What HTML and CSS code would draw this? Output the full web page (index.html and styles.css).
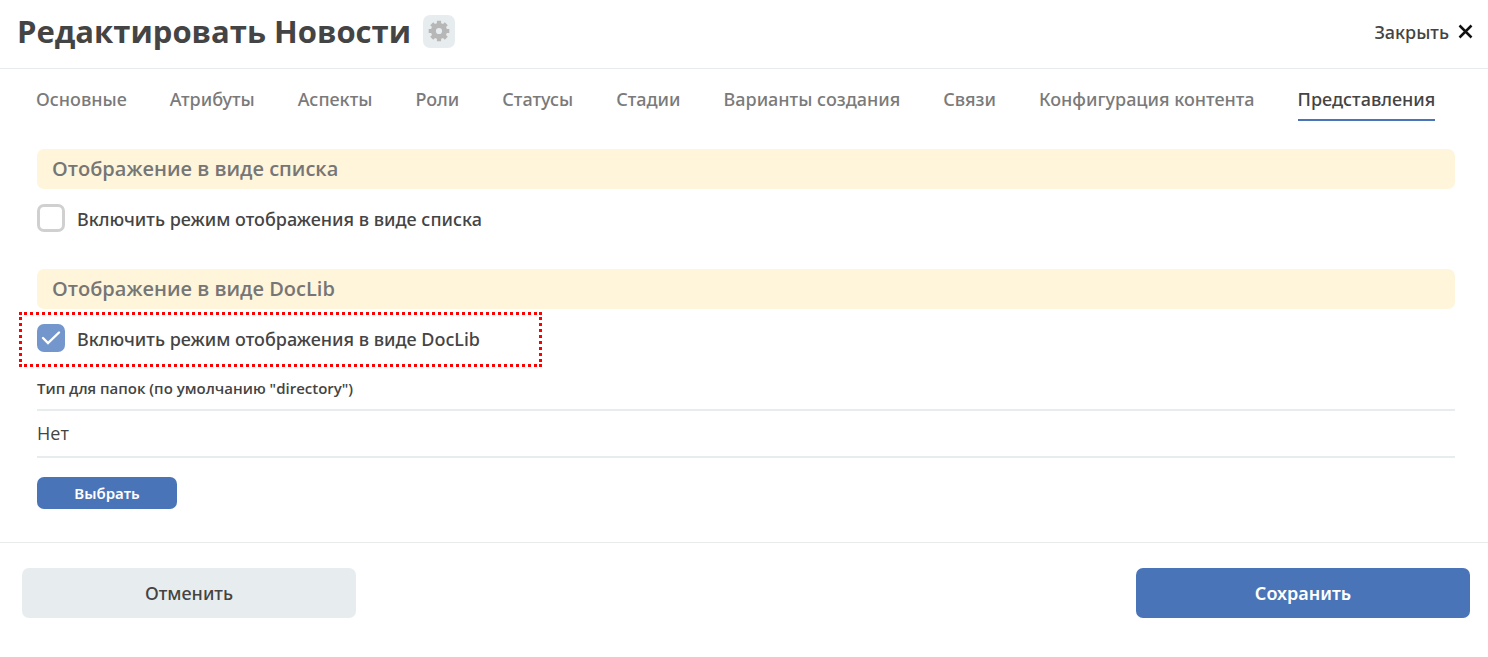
FILE: index.html
```html
<!DOCTYPE html>
<html lang="ru">
<head>
<meta charset="utf-8">
<title>Редактировать Новости</title>
<link rel="stylesheet" href="styles.css">
</head>
<body>
<header class="header">
  <h1 class="title">Редактировать Новости</h1>
  <button class="settings" type="button" aria-label="Настройки">
    <svg width="22" height="23" viewBox="-11 -11 22 23" aria-hidden="true"><g fill="none" stroke="#b7b7b7"><circle r="5.600" stroke-width="5"/><path stroke-width="4.200" d="M0-10.300V-7M0 7V10.300M-10.300 0H-7M7 0H10.300M-7.300-7.300L-5-5M7.300-7.300L5-5M-7.300 7.300L-5 5M7.300 7.300L5 5"/></g></svg>
  </button>
  <button class="close" type="button">Закрыть
    <svg width="15" height="15" viewBox="0 0 15 15" aria-hidden="true"><path d="M1.500 1.500l12 12M13.500 1.500l-12 12" stroke="#111" stroke-width="2.500"/></svg>
  </button>
</header>
<nav class="tabs">
  <a class="tab" href="#">Основные</a>
  <a class="tab" href="#">Атрибуты</a>
  <a class="tab" href="#">Аспекты</a>
  <a class="tab" href="#">Роли</a>
  <a class="tab" href="#">Статусы</a>
  <a class="tab" href="#">Стадии</a>
  <a class="tab" href="#">Варианты создания</a>
  <a class="tab" href="#">Связи</a>
  <a class="tab" href="#">Конфигурация контента</a>
  <a class="tab active" href="#" aria-current="page">Представления</a>
</nav>
<main class="content">
  <section class="group">
    <h2 class="group-title">Отображение в виде списка</h2>
    <label class="option"><input class="check" type="checkbox">Включить режим отображения в виде списка</label>
  </section>
  <section class="group">
    <h2 class="group-title">Отображение в виде DocLib</h2>
    <label class="option marked"><input class="check" type="checkbox" checked>Включить режим отображения в виде DocLib</label>
    <h3 class="field-label">Тип для папок (по умолчанию "directory")</h3>
    <p class="value">Нет</p>
    <button class="select" type="button">Выбрать</button>
  </section>
</main>
<footer class="footer">
  <button class="action" type="button">Отменить</button>
  <button class="action primary" type="button">Сохранить</button>
</footer>
</body>
</html>
```
FILE: styles.css
```css
* { box-sizing: border-box; }
body {
  margin: 0;
  background: #fff;
  color: #444;
  font-family: "Noto Sans", "Open Sans", sans-serif;
}
button { border: 0; font-family: inherit; cursor: pointer; }
.header {
  display: flex;
  align-items: center;
  padding: 13px 15px 18px 17px;
  border-bottom: 1px solid #e7edee;
}
.title {
  margin: 0;
  font-family: "Open Sans", "Noto Sans", sans-serif;
  font-size: 31px;
  line-height: 37px;
  font-weight: 700;
}
.settings {
  display: grid;
  place-items: center;
  width: 32px;
  height: 33px;
  margin-left: 12px;
  padding: 0;
  border-radius: 7px;
  background: #e7edee;
}
.close {
  display: flex;
  align-items: center;
  gap: 9px;
  margin-left: auto;
  padding: 0;
  background: none;
  color: #444;
  font-size: 18px;
  font-weight: 500;
}
.tabs {
  display: flex;
  gap: 43px;
  padding: 17px 33px 0 36px;
}
.tab {
  padding-bottom: 7px;
  border-bottom: 2px solid transparent;
  color: #7a7a7a;
  font-size: 18px;
  line-height: 26px;
  font-weight: 500;
  white-space: nowrap;
  text-decoration: none;
}
.tab.active { border-color: #4a74b8; color: #444; }
.content { padding: 28px 33px 33px 37px; }
.group + .group { margin-top: 35px; }
.group-title {
  margin: 0;
  padding: 0 15px;
  border-radius: 7px;
  background: #fff5da;
  color: #767676;
  font-family: "Open Sans", "Noto Sans", sans-serif;
  font-size: 20px;
  line-height: 40px;
  font-weight: 600;
}
.option {
  display: flex;
  align-items: flex-start;
  gap: 12px;
  padding-top: 15px;
  font-size: 18px;
  line-height: 30px;
  font-weight: 500;
}
.marked {
  width: 523px;
  margin: 3px 0 0 -18px;
  padding: 9px 15px 10px;
  border: 3px dotted #f00;
}
.check {
  appearance: none;
  width: 28px;
  height: 28px;
  margin: 0;
  border: 3px solid #d0d0d0;
  border-radius: 7px;
  background: #fff;
}
.check:checked {
  border: 0;
  background: #7396cd url("data:image/svg+xml,%3Csvg xmlns='http://www.w3.org/2000/svg' viewBox='0 0 28 28'%3E%3Cpath d='M6 14l5 5L22 8.500' fill='none' stroke='white' stroke-width='2.400' stroke-linecap='round'/%3E%3C/svg%3E");
}
.field-label {
  margin: 11px 0 10px;
  font-family: "Open Sans", "Noto Sans", sans-serif;
  font-size: 15px;
  line-height: 21px;
  font-weight: 600;
}
.value {
  margin: 0;
  border: 2px solid #e7edee;
  border-width: 2px 0;
  font-family: "Open Sans", "Noto Sans", sans-serif;
  font-size: 18px;
  line-height: 45px;
}
.select {
  display: block;
  width: 140px;
  height: 32px;
  margin-top: 19px;
  border-radius: 7px;
  background: #4a74b8;
  color: #fff;
  font-size: 15px;
  font-weight: 600;
}
.footer {
  display: flex;
  justify-content: space-between;
  padding: 25px 18px 39px 22px;
  border-top: 1px solid #e9eaea;
}
.action {
  width: 334px;
  height: 50px;
  border-radius: 7px;
  background: #e7edee;
  color: #444;
  font-size: 18px;
  font-weight: 500;
}
.primary { background: #4a74b8; color: #fff; font-weight: 600; }
```
